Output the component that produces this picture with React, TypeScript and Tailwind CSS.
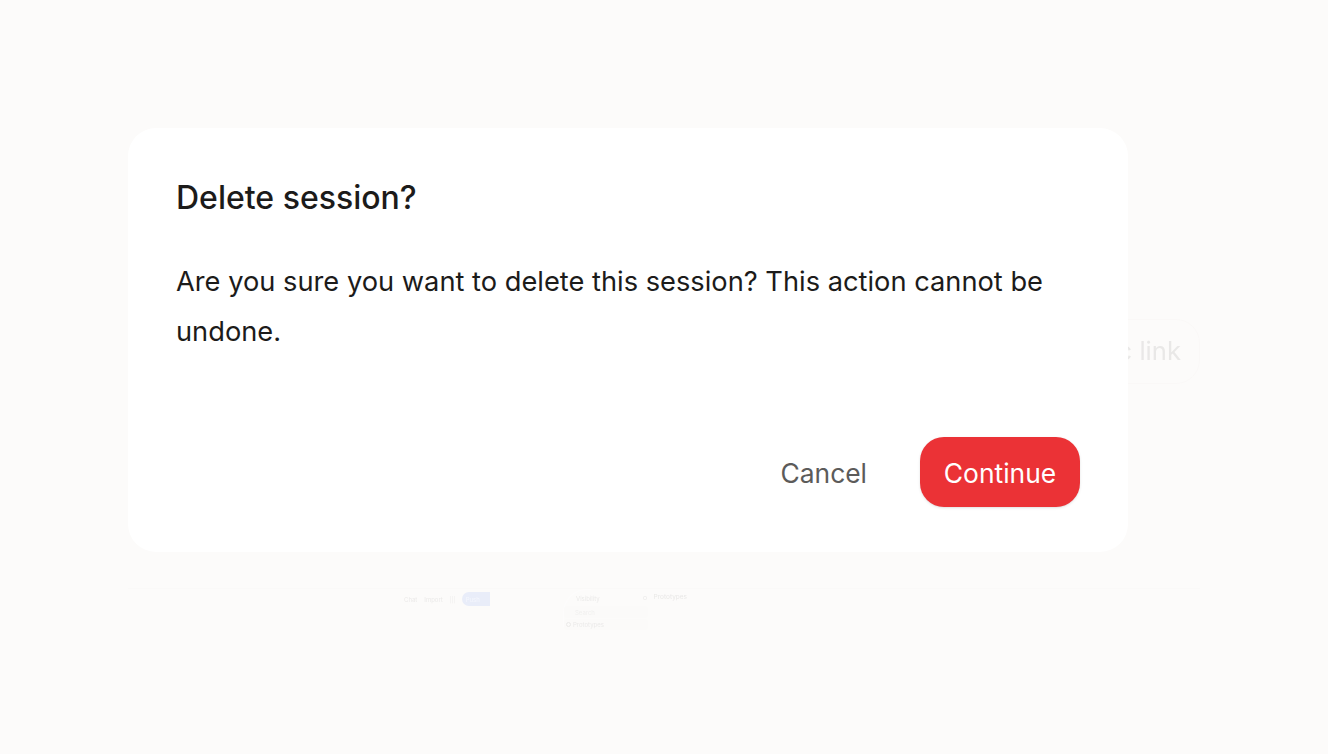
export default function App() {
  return (
    <div className="relative h-[754px] w-[1328px] overflow-hidden bg-[#fcfbfa] font-['Inter',sans-serif]">
      {/* dimmed page behind the dialog */}
      <div className="absolute left-[1000px] top-[319px] flex h-[65px] w-[200px] items-center justify-end rounded-[24px] border border-[#faf8f7] pr-[18px] text-[25.6px] text-[#e9e8e7] blur-[0.6px]">
        <span>ic link</span>
      </div>
      <div className="absolute left-[128px] top-[588px] h-px w-[1072px] bg-[#faf9f8]" />
      <div className="absolute left-[404px] top-[592px] flex h-[14px] items-center gap-[7px] text-[6px] text-[#ebeae9] blur-[0.7px]">
        <span>Chat</span>
        <span>Import</span>
        <span className="w-[5px] text-center text-[#eeedec]">|||</span>
        <span className="flex h-[14px] w-[28px] items-center rounded-l-full rounded-tr-[14px] bg-[#e9edf9] pl-1 text-[#f5f7fd]">Push</span>
      </div>
      <div className="absolute left-[563px] top-[589px] h-[38px] w-[28px] rounded-tl-[24px] border-l border-t border-[#fdfcfc]" />
      <div className="absolute left-[564px] top-[592px] flex w-[123px] flex-col text-[6px] text-[#ebeae9] blur-[0.7px]">
        <div className="flex h-[12px] items-center justify-between">
          <span className="pl-[12px]">Visibility</span>
          <span className="flex items-center gap-[7px] text-[6.5px] text-[#e9e8e7]">
            <span className="h-[4px] w-[4px] rounded-[1px] border border-[#f1f0ef]" />
            Prototypes
          </span>
        </div>
        <div className="mt-[2px] flex h-[12px] w-[84px] items-center rounded-[3px] bg-[#fbfaf9] pl-[11px] text-[#f1f0ef]">Search</div>
        <div className="mt-px flex h-[11px] w-[84px] items-center gap-[2px] rounded-[3px] bg-[#fbfaf9] pl-[2px]">
          <span className="h-[5px] w-[5px] rounded-full border border-[#ebeae9]" />
          Prototypes
        </div>
      </div>

      {/* dialog */}
      <div className="relative flex h-full w-full justify-start pl-[128px] pt-[128px]">
        <div className="flex h-[424px] w-[1000px] flex-col rounded-[28px] bg-white px-[48px] pb-[45px] pt-[50px]">
          <h2 className="text-[32px] font-[450] leading-[40px] text-[#1c1b1a]">Delete session?</h2>
          <p className="mt-[39px] text-[27.26px] leading-[50px] text-[#1c1b1a]">
            Are you sure you want to delete this session? This action cannot be undone.
          </p>
          <div className="mt-auto flex items-center justify-end gap-[24px]">
            <button className="flex h-[70px] items-center px-[29px] pt-[4px] text-[26.4px] font-normal text-[#5c5b5a]">Cancel</button>
            <button className="flex h-[70px] w-[160px] items-center justify-center rounded-[24px] bg-[#eb3236] pt-[4px] text-[26.4px] font-normal text-white shadow-sm">Continue</button>
          </div>
        </div>
      </div>
    </div>
  );
}
